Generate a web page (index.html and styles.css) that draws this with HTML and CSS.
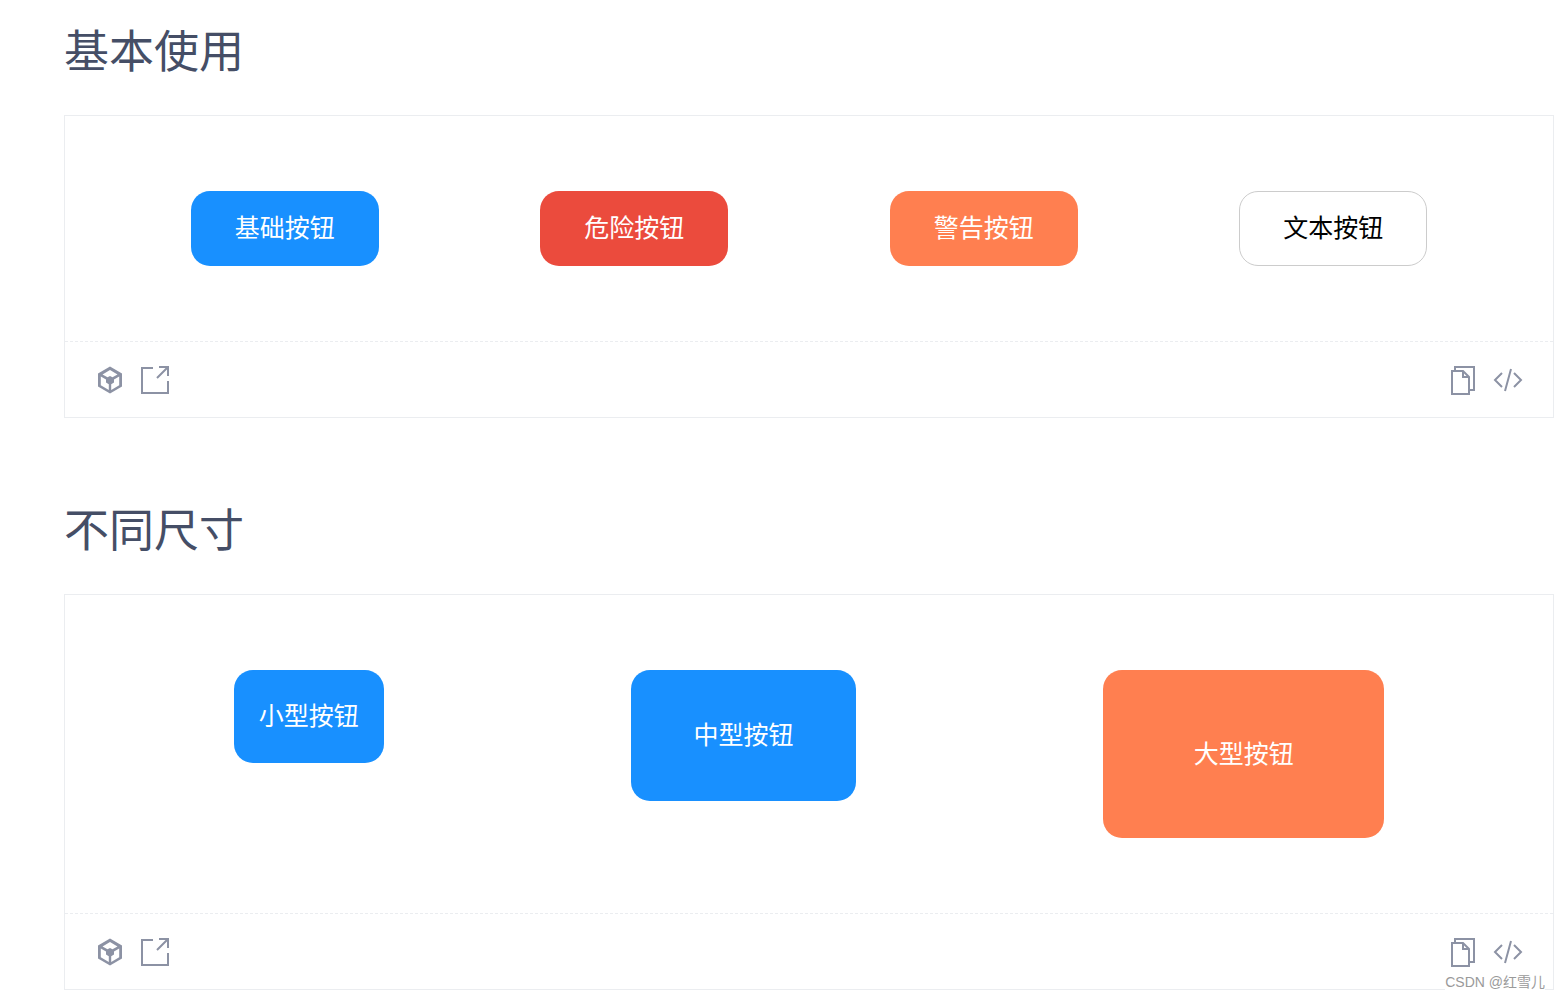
FILE: index.html
```html
<!DOCTYPE html>
<html lang="zh-CN">

<head>
  <meta charset="UTF-8" />
  <meta name="viewport" content="width=device-width, initial-scale=1.0" />
  <title>按钮</title>
  <link rel="stylesheet" href="styles.css">
</head>

<body>
  <!-- 基本使用 -->
  <h2 class="title">基本使用</h2>
  <div class="card">
    <div class="demo">
      <button class="btn btn-primary">基础按钮</button>
      <button class="btn btn-danger">危险按钮</button>
      <button class="btn btn-warning">警告按钮</button>
      <button class="btn btn-text">文本按钮</button>
    </div>
    <div class="actions">
      <div class="icons">
        <svg class="icon" viewBox="0 0 30 30"><path class="solid" d="M15 1.5 27 8.5V21.5L15 28.5 3 21.5V8.5Z" /><path class="cut" d="M15 5 22.5 9.4 17.5 12.2 15 11 12.5 12.2 7.5 9.4ZM5.8 11.6 11 14.6V17.6L13.8 19.2V25L5.8 20.3ZM24.2 11.6 19 14.6V17.6L16.2 19.2V25L24.2 20.3Z" /></svg>
        <svg class="icon" viewBox="0 0 30 30"><path class="line" d="M13 3H2V28H28V16M17 13 27 3M19 2H28V11" /></svg>
      </div>
      <div class="icons">
        <svg class="icon" viewBox="0 0 30 30"><path class="line" d="M7 6V2H26V25H21M4 6H15L21 12V29H4ZM15 6V12H21" /></svg>
        <svg class="icon" viewBox="0 0 30 30"><path class="line" d="M9 8 2 15 9 22M21 8 28 15 21 22M18 4 12 26" /></svg>
      </div>
    </div>
  </div>

  <!-- 不同尺寸 -->
  <h2 class="title">不同尺寸</h2>
  <div class="card">
    <div class="demo demo-top">
      <button class="btn btn-primary btn-small">小型按钮</button>
      <button class="btn btn-primary btn-middle">中型按钮</button>
      <button class="btn btn-warning btn-large">大型按钮</button>
    </div>
    <div class="actions">
      <div class="icons">
        <svg class="icon" viewBox="0 0 30 30"><path class="solid" d="M15 1.5 27 8.5V21.5L15 28.5 3 21.5V8.5Z" /><path class="cut" d="M15 5 22.5 9.4 17.5 12.2 15 11 12.5 12.2 7.5 9.4ZM5.8 11.6 11 14.6V17.6L13.8 19.2V25L5.8 20.3ZM24.2 11.6 19 14.6V17.6L16.2 19.2V25L24.2 20.3Z" /></svg>
        <svg class="icon" viewBox="0 0 30 30"><path class="line" d="M13 3H2V28H28V16M17 13 27 3M19 2H28V11" /></svg>
      </div>
      <div class="icons">
        <svg class="icon" viewBox="0 0 30 30"><path class="line" d="M7 6V2H26V25H21M4 6H15L21 12V29H4ZM15 6V12H21" /></svg>
        <svg class="icon" viewBox="0 0 30 30"><path class="line" d="M9 8 2 15 9 22M21 8 28 15 21 22M18 4 12 26" /></svg>
      </div>
    </div>
  </div>

  <!-- 水印 -->
  <div class="watermark">CSDN @红雪儿</div>
</body>

</html>
```

FILE: styles.css
```css
html,
body {
  height: 998px;
  overflow: hidden;
}

body {
  position: relative;
  margin: 0;
  padding: 0 5px 0 64px;
  background: #fff;
  font-family: "Liberation Sans", "Noto Sans CJK SC", sans-serif;
}

/* 标题 */
.title {
  margin: 0;
  height: 115px;
  padding-top: 20px;
  box-sizing: border-box;
  font-size: 45px;
  line-height: 65px;
  font-weight: 400;
  color: #454e66;
}

.card + .title {
  margin-top: 61px;
  height: 115px;
}

/* 卡片 */
.card {
  border: 1px solid #ebedf0;
  box-sizing: border-box;
}

.demo {
  display: flex;
  justify-content: space-around;
  align-items: flex-start;
  padding: 75px 45px;
}

/* 按钮 */
.btn {
  box-sizing: border-box;
  height: 75px;
  padding: 0 44px;
  border: 0;
  border-radius: 19px;
  font-family: inherit;
  font-size: 25px;
  line-height: 1;
  color: #fff;
  white-space: nowrap;
}

.btn-primary {
  background: #1890ff;
}

.btn-danger {
  background: #eb4b3d;
}

.btn-warning {
  background: #ff7f50;
}

.btn-text {
  background: #fff;
  border: 1px solid #ccc;
  color: #000;
  padding: 0 43px;
}

.btn-small {
  width: 150px;
  height: 93px;
  padding: 0;
}

.btn-middle {
  width: 225px;
  height: 131px;
  padding: 0;
}

.btn-large {
  width: 281px;
  height: 168px;
  padding: 0;
}

/* 底部操作栏 */
.actions {
  display: flex;
  justify-content: space-between;
  align-items: center;
  height: 75px;
  padding: 0 30px;
  border-top: 1px dashed #ebedf0;
}

.icons {
  display: flex;
  gap: 15px;
}

.icon {
  display: block;
  width: 30px;
  height: 30px;
}

.solid {
  fill: #8c92a4;
}

.cut {
  fill: #fff;
}

.line {
  fill: none;
  stroke: #8c92a4;
  stroke-width: 2;
}

/* 水印 */
.watermark {
  position: absolute;
  right: 14px;
  top: 973px;
  font-size: 14px;
  line-height: 18px;
  color: #9a9a9a;
  background: #fff;
}
```
